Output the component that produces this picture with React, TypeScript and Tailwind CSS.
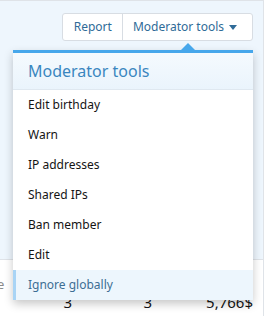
import { useState } from 'react';

const items = ['Edit birthday', 'Warn', 'IP addresses', 'Shared IPs', 'Ban member', 'Edit', 'Ignore globally'];

export default function App() {
  const [active] = useState('Ignore globally');

  return (
    <div className="relative w-[269px] h-[316px] overflow-hidden bg-white font-['Noto_Sans',sans-serif] text-[12px]">
      <div className="w-[264px] h-full border-t border-r border-[#dfe3e8] flex flex-col">
        {/* profile header area */}
        <div className="h-[259px] shrink-0 bg-[#eef6fd] border-b border-[#dfe3e8] flex justify-end pt-[12px] pr-[10px]">
          <div className="flex h-[28px] bg-white border border-[#d8dde3] rounded-[3px] text-[#2f6b98]">
            <button className="pl-[11px] pr-[10px] border-r border-[#d8dde3] leading-none">Report</button>
            <button className="pl-[10px] pr-[15px] flex items-center gap-[5px] leading-none">
              Moderator tools
              <svg width="8" height="5" viewBox="0 0 8 5" className="fill-current">
                <path d="M0 0h8L4 5z" />
              </svg>
            </button>
          </div>
        </div>
        {/* stats */}
        <div className="flex flex-col pt-[16px] text-[#8a8a8a]">
          <div className="leading-[16px] text-[13px] -ml-[3px]">e</div>
          <div className="flex pt-[3px] leading-[15px] text-[15px] text-[#141414]">
            <span className="w-[72px] text-right">3</span>
            <span className="w-[80px] text-right">3</span>
            <span className="w-[101px] text-right">5,766$</span>
          </div>
        </div>
      </div>

      {/* dropdown menu */}
      <div className="absolute left-[13px] top-[43px] w-[240px]">
        <div className="relative h-[7px]">
          <div className="absolute left-[168px] top-0 w-0 h-0 border-l-[7px] border-r-[7px] border-b-[7px] border-l-transparent border-r-transparent border-b-[#47a7eb]" />
        </div>
        <div className="bg-white border-t-[3px] border-[#47a7eb] shadow-[0_4px_10px_rgba(0,0,0,0.22)] rounded-b-[3px]">
          <div className="h-[37px] flex items-center px-[15px] bg-gradient-to-b from-[#f5fafe] to-[#eaf4fc] border-b border-[#dfe8f0] text-[16px] text-[#3a86bf]">
            Moderator tools
          </div>
          <ul>
            {items.map((item) => (
              <li
                key={item}
                className={
                  item === active
                    ? 'h-[30px] flex items-center pl-[12px] border-l-[3px] border-[#a9d4f5] bg-[#edf6fd] text-[#3d6e94]'
                    : 'h-[30px] flex items-center pl-[15px] text-[#141414]'
                }
              >
                {item}
              </li>
            ))}
          </ul>
        </div>
      </div>
    </div>
  );
}
